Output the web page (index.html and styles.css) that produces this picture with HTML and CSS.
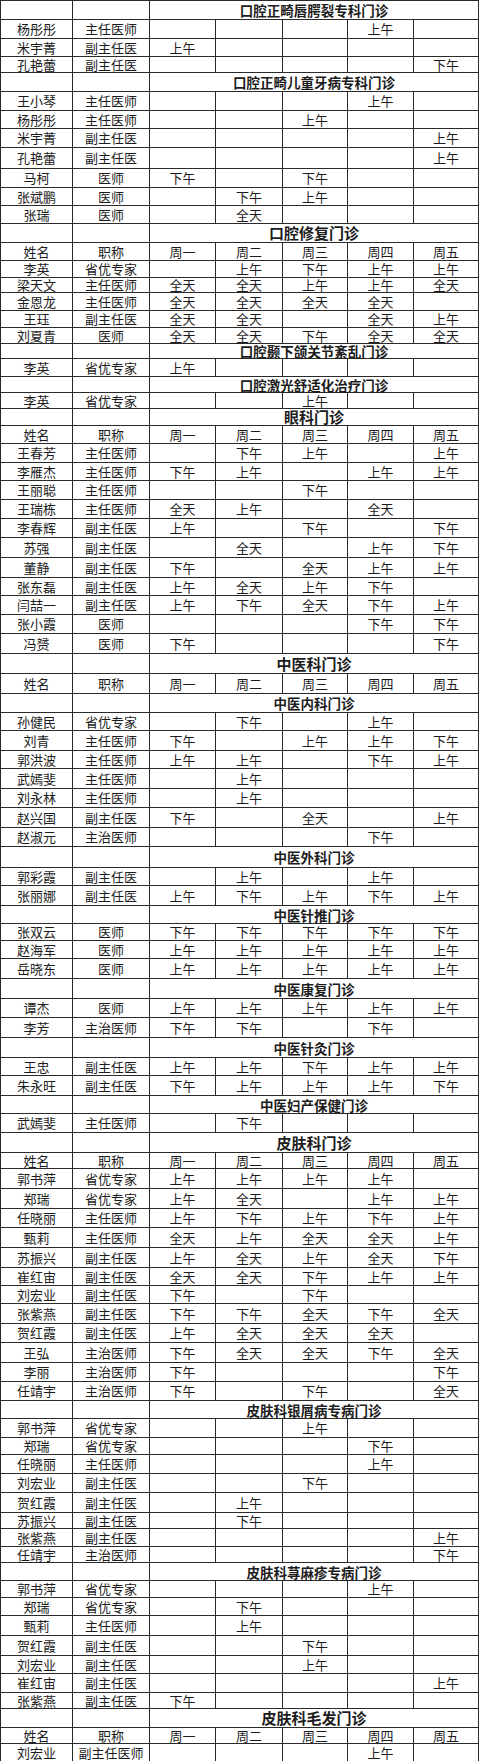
FILE: index.html
```html
<!DOCTYPE html>
<html lang="zh-CN">
<head>
<meta charset="utf-8">
<title>门诊排班表</title>
<link rel="stylesheet" href="styles.css">
</head>
<body>
<table class="sched">
<colgroup><col class="c1"><col class="c2"><col class="c3"><col class="c4"><col class="c5"><col class="c6"><col class="c7"></colgroup>
<tbody>
<tr class="h19"><td></td><td></td><td colspan="5" class="ts">口腔正畸唇腭裂专科门诊</td></tr>
<tr class="h19"><td>杨彤彤</td><td>主任医师</td><td></td><td></td><td></td><td>上午</td><td></td></tr>
<tr class="h18"><td>米宇菁</td><td>副主任医</td><td>上午</td><td></td><td></td><td></td><td></td></tr>
<tr class="h16"><td>孔艳蕾</td><td>副主任医</td><td></td><td></td><td></td><td></td><td>下午</td></tr>
<tr class="h19"><td></td><td></td><td colspan="5" class="ts">口腔正畸儿童牙病专科门诊</td></tr>
<tr class="h19"><td>王小琴</td><td>主任医师</td><td></td><td></td><td></td><td>上午</td><td></td></tr>
<tr class="h18"><td>杨彤彤</td><td>主任医师</td><td></td><td></td><td>上午</td><td></td><td></td></tr>
<tr class="h19"><td>米宇菁</td><td>副主任医</td><td></td><td></td><td></td><td></td><td>上午</td></tr>
<tr class="h21"><td>孔艳蕾</td><td>副主任医</td><td></td><td></td><td></td><td></td><td>上午</td></tr>
<tr class="h19"><td>马柯</td><td>医师</td><td>下午</td><td></td><td>下午</td><td></td><td></td></tr>
<tr class="h18"><td>张斌鹏</td><td>医师</td><td></td><td>下午</td><td>上午</td><td></td><td></td></tr>
<tr class="h18"><td>张瑞</td><td>医师</td><td></td><td>全天</td><td></td><td></td><td></td></tr>
<tr class="h19"><td></td><td></td><td colspan="5" class="tb">口腔修复门诊</td></tr>
<tr class="h18"><td>姓名</td><td>职称</td><td>周一</td><td>周二</td><td>周三</td><td>周四</td><td>周五</td></tr>
<tr class="h17"><td>李英</td><td>省优专家</td><td></td><td>上午</td><td>下午</td><td>上午</td><td>上午</td></tr>
<tr class="h15"><td>梁天文</td><td>主任医师</td><td>全天</td><td>全天</td><td>上午</td><td>上午</td><td>全天</td></tr>
<tr class="h18"><td>金恩龙</td><td>主任医师</td><td>全天</td><td>全天</td><td>全天</td><td>全天</td><td></td></tr>
<tr class="h17"><td>王珏</td><td>副主任医</td><td>全天</td><td>全天</td><td></td><td>全天</td><td>上午</td></tr>
<tr class="h16"><td>刘夏青</td><td>医师</td><td>全天</td><td>全天</td><td>下午</td><td>全天</td><td>全天</td></tr>
<tr class="h15"><td></td><td></td><td colspan="5" class="ts">口腔颞下颌关节紊乱门诊</td></tr>
<tr class="h18"><td>李英</td><td>省优专家</td><td>上午</td><td></td><td></td><td></td><td></td></tr>
<tr class="h16"><td></td><td></td><td colspan="5" class="ts">口腔激光舒适化治疗门诊</td></tr>
<tr class="h16"><td>李英</td><td>省优专家</td><td></td><td></td><td>上午</td><td></td><td></td></tr>
<tr class="h17"><td></td><td></td><td colspan="5" class="tb">眼科门诊</td></tr>
<tr class="h18"><td>姓名</td><td>职称</td><td>周一</td><td>周二</td><td>周三</td><td>周四</td><td>周五</td></tr>
<tr class="h19"><td>王春芳</td><td>主任医师</td><td></td><td>下午</td><td>上午</td><td></td><td>上午</td></tr>
<tr class="h18"><td>李雁杰</td><td>主任医师</td><td>下午</td><td>上午</td><td></td><td>上午</td><td>上午</td></tr>
<tr class="h19"><td>王丽聪</td><td>主任医师</td><td></td><td></td><td>下午</td><td></td><td></td></tr>
<tr class="h19"><td>王瑞栋</td><td>主任医师</td><td>全天</td><td>上午</td><td></td><td>全天</td><td></td></tr>
<tr class="h19"><td>李春辉</td><td>副主任医</td><td>上午</td><td></td><td>下午</td><td></td><td>下午</td></tr>
<tr class="h20"><td>苏强</td><td>副主任医</td><td></td><td>全天</td><td></td><td>上午</td><td>下午</td></tr>
<tr class="h20"><td>董静</td><td>副主任医</td><td>下午</td><td></td><td>全天</td><td>上午</td><td>上午</td></tr>
<tr class="h18"><td>张东磊</td><td>副主任医</td><td>上午</td><td>全天</td><td>上午</td><td>下午</td><td></td></tr>
<tr class="h19"><td>闫喆一</td><td>副主任医</td><td>上午</td><td>下午</td><td>全天</td><td>下午</td><td>上午</td></tr>
<tr class="h19"><td>张小霞</td><td>医师</td><td></td><td></td><td></td><td>下午</td><td>下午</td></tr>
<tr class="h20"><td>冯赟</td><td>医师</td><td>下午</td><td></td><td></td><td></td><td>下午</td></tr>
<tr class="h20"><td></td><td></td><td colspan="5" class="tb">中医科门诊</td></tr>
<tr class="h20"><td>姓名</td><td>职称</td><td>周一</td><td>周二</td><td>周三</td><td>周四</td><td>周五</td></tr>
<tr class="h19"><td></td><td></td><td colspan="5" class="ts">中医内科门诊</td></tr>
<tr class="h18"><td>孙健民</td><td>省优专家</td><td></td><td>下午</td><td></td><td>上午</td><td></td></tr>
<tr class="h20"><td>刘青</td><td>主任医师</td><td>下午</td><td></td><td>上午</td><td>上午</td><td>下午</td></tr>
<tr class="h18"><td>郭洪波</td><td>主任医师</td><td>上午</td><td>上午</td><td></td><td>下午</td><td>上午</td></tr>
<tr class="h20"><td>武嫣斐</td><td>主任医师</td><td></td><td>上午</td><td></td><td></td><td></td></tr>
<tr class="h19"><td>刘永林</td><td>主任医师</td><td></td><td>上午</td><td></td><td></td><td></td></tr>
<tr class="h20"><td>赵兴国</td><td>副主任医</td><td>下午</td><td></td><td>全天</td><td></td><td>上午</td></tr>
<tr class="h19"><td>赵淑元</td><td>主治医师</td><td></td><td></td><td></td><td>下午</td><td></td></tr>
<tr class="h21"><td></td><td></td><td colspan="5" class="ts">中医外科门诊</td></tr>
<tr class="h18"><td>郭彩霞</td><td>副主任医</td><td></td><td>上午</td><td></td><td>上午</td><td></td></tr>
<tr class="h20"><td>张丽娜</td><td>副主任医</td><td>上午</td><td>下午</td><td>上午</td><td>下午</td><td>上午</td></tr>
<tr class="h18"><td></td><td></td><td colspan="5" class="ts">中医针推门诊</td></tr>
<tr class="h17"><td>张双云</td><td>医师</td><td>下午</td><td>下午</td><td>下午</td><td>下午</td><td>下午</td></tr>
<tr class="h18"><td>赵海军</td><td>医师</td><td>上午</td><td>上午</td><td>上午</td><td>上午</td><td>上午</td></tr>
<tr class="h20"><td>岳晓东</td><td>医师</td><td>上午</td><td>上午</td><td>上午</td><td>上午</td><td>上午</td></tr>
<tr class="h20"><td></td><td></td><td colspan="5" class="ts">中医康复门诊</td></tr>
<tr class="h19"><td>谭杰</td><td>医师</td><td>上午</td><td>上午</td><td>上午</td><td>上午</td><td>上午</td></tr>
<tr class="h20"><td>李芳</td><td>主治医师</td><td>下午</td><td>下午</td><td></td><td>下午</td><td></td></tr>
<tr class="h20"><td></td><td></td><td colspan="5" class="ts">中医针灸门诊</td></tr>
<tr class="h18"><td>王忠</td><td>副主任医</td><td>上午</td><td>上午</td><td>下午</td><td>上午</td><td>上午</td></tr>
<tr class="h20"><td>朱永旺</td><td>副主任医</td><td>下午</td><td>上午</td><td>上午</td><td>上午</td><td>下午</td></tr>
<tr class="h18"><td></td><td></td><td colspan="5" class="ts">中医妇产保健门诊</td></tr>
<tr class="h19"><td>武嫣斐</td><td>主任医师</td><td></td><td>下午</td><td></td><td></td><td></td></tr>
<tr class="h20"><td></td><td></td><td colspan="5" class="tb">皮肤科门诊</td></tr>
<tr class="h16"><td>姓名</td><td>职称</td><td>周一</td><td>周二</td><td>周三</td><td>周四</td><td>周五</td></tr>
<tr class="h20"><td>郭书萍</td><td>省优专家</td><td>上午</td><td>上午</td><td>上午</td><td>上午</td><td></td></tr>
<tr class="h20"><td>郑瑞</td><td>省优专家</td><td>上午</td><td>全天</td><td></td><td>上午</td><td>上午</td></tr>
<tr class="h19"><td>任晓丽</td><td>主任医师</td><td>上午</td><td>下午</td><td>上午</td><td>下午</td><td>上午</td></tr>
<tr class="h20"><td>甄莉</td><td>主任医师</td><td>全天</td><td>上午</td><td>全天</td><td>全天</td><td>上午</td></tr>
<tr class="h20"><td>苏振兴</td><td>副主任医</td><td>上午</td><td>全天</td><td>上午</td><td>全天</td><td>下午</td></tr>
<tr class="h18"><td>崔红宙</td><td>副主任医</td><td>全天</td><td>全天</td><td>下午</td><td>上午</td><td>上午</td></tr>
<tr class="h18"><td>刘宏业</td><td>副主任医</td><td>下午</td><td></td><td>下午</td><td></td><td></td></tr>
<tr class="h20"><td>张紫燕</td><td>副主任医</td><td>下午</td><td>下午</td><td>全天</td><td>下午</td><td>全天</td></tr>
<tr class="h19"><td>贺红霞</td><td>副主任医</td><td>上午</td><td>全天</td><td>全天</td><td>全天</td><td></td></tr>
<tr class="h20"><td>王弘</td><td>主治医师</td><td>下午</td><td>全天</td><td>全天</td><td>下午</td><td>全天</td></tr>
<tr class="h19"><td>李丽</td><td>主治医师</td><td>下午</td><td></td><td></td><td></td><td>下午</td></tr>
<tr class="h19"><td>任靖宇</td><td>主治医师</td><td>下午</td><td></td><td>下午</td><td></td><td>全天</td></tr>
<tr class="h18"><td></td><td></td><td colspan="5" class="ts">皮肤科银屑病专病门诊</td></tr>
<tr class="h19"><td>郭书萍</td><td>省优专家</td><td></td><td></td><td>上午</td><td></td><td></td></tr>
<tr class="h17"><td>郑瑞</td><td>省优专家</td><td></td><td></td><td></td><td>下午</td><td></td></tr>
<tr class="h19"><td>任晓丽</td><td>主任医师</td><td></td><td></td><td></td><td>上午</td><td></td></tr>
<tr class="h19"><td>刘宏业</td><td>副主任医</td><td></td><td></td><td>下午</td><td></td><td></td></tr>
<tr class="h20"><td>贺红霞</td><td>副主任医</td><td></td><td>上午</td><td></td><td></td><td></td></tr>
<tr class="h16"><td>苏振兴</td><td>副主任医</td><td></td><td>下午</td><td></td><td></td><td></td></tr>
<tr class="h18"><td>张紫燕</td><td>副主任医</td><td></td><td></td><td></td><td></td><td>上午</td></tr>
<tr class="h16"><td>任靖宇</td><td>主治医师</td><td></td><td></td><td></td><td></td><td>下午</td></tr>
<tr class="h18"><td></td><td></td><td colspan="5" class="ts">皮肤科荨麻疹专病门诊</td></tr>
<tr class="h17"><td>郭书萍</td><td>省优专家</td><td></td><td></td><td></td><td>上午</td><td></td></tr>
<tr class="h18"><td>郑瑞</td><td>省优专家</td><td></td><td>下午</td><td></td><td></td><td></td></tr>
<tr class="h20"><td>甄莉</td><td>主任医师</td><td></td><td>上午</td><td></td><td></td><td></td></tr>
<tr class="h20"><td>贺红霞</td><td>副主任医</td><td></td><td></td><td>下午</td><td></td><td></td></tr>
<tr class="h18"><td>刘宏业</td><td>副主任医</td><td></td><td></td><td>上午</td><td></td><td></td></tr>
<tr class="h19"><td>崔红宙</td><td>副主任医</td><td></td><td></td><td></td><td></td><td>上午</td></tr>
<tr class="h16"><td>张紫燕</td><td>副主任医</td><td>下午</td><td></td><td></td><td></td><td></td></tr>
<tr class="h19"><td></td><td></td><td colspan="5" class="tb">皮肤科毛发门诊</td></tr>
<tr class="h16"><td>姓名</td><td>职称</td><td>周一</td><td>周二</td><td>周三</td><td>周四</td><td>周五</td></tr>
<tr class="h18"><td>刘宏业</td><td>副主任医师</td><td></td><td></td><td></td><td>上午</td><td></td></tr>
</tbody>
</table>
</body>
</html>
```

FILE: styles.css
```css
html, body {
  margin: 0;
  padding: 0;
  background: #ffffff;
}
body {
  font-family: "Noto Sans CJK SC", "Noto Sans", sans-serif;
  color: #1c1c1c;
  overflow: hidden;
}
.sched {
  border-collapse: collapse;
  table-layout: fixed;
  width: 479px;
  font-size: 13px;
  line-height: 14px;
}
.c1 { width: 72px; }
.c2 { width: 77px; }
.c3 { width: 66px; }
.c4 { width: 67px; }
.c5 { width: 65px; }
.c6 { width: 66px; }
.c7 { width: 65px; }
.sched td {
  border: 1px solid #2a2a2a;
  padding: 0;
  text-align: center;
  vertical-align: middle;
  white-space: nowrap;
}
.sched td.ts {
  font-weight: bold;
  font-size: 13.5px;
}
.sched td.tb {
  font-weight: bold;
  font-size: 15px;
}
.h15 { height: 15px; }
.h16 { height: 16px; }
.h17 { height: 17px; }
.h18 { height: 18px; }
.h19 { height: 19px; }
.h20 { height: 20px; }
.h21 { height: 21px; }
```
